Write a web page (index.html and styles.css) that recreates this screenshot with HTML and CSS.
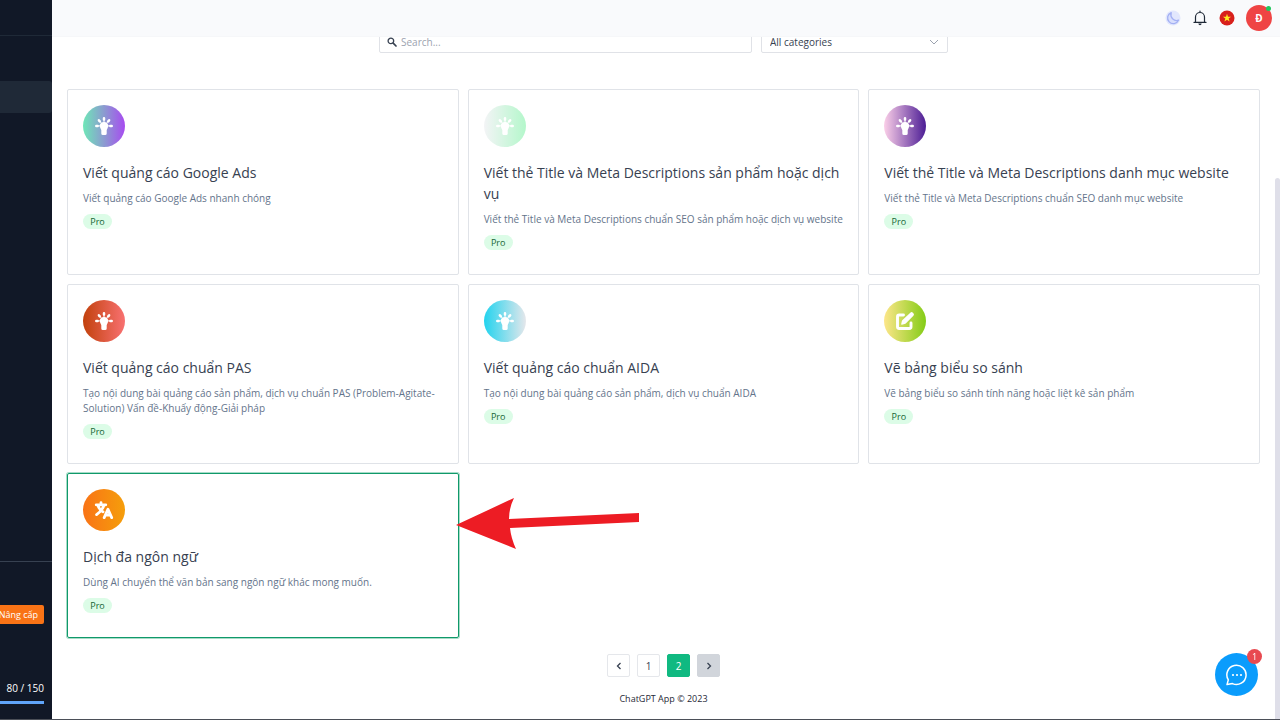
FILE: index.html
```html
<!DOCTYPE html>
<html lang="vi">
<head>
<meta charset="utf-8">
<meta name="viewport" content="width=device-width, initial-scale=1">
<title>ChatGPT App</title>
<link rel="stylesheet" href="styles.css">
</head>
<body>
<svg class="sprite" aria-hidden="true">
  <symbol id="bulb" viewBox="0 0 20 20">
    <path d="M10 5.900c2.500 0 4.200 1.700 4.200 3.900 0 2-1.200 3-1.500 4.400v3.200q0 1.600-1.600 1.600H8.900q-1.600 0-1.600-1.600v-3.200C7 12.800 5.800 11.800 5.800 9.800c0-2.200 1.700-3.900 4.200-3.900z" fill="currentColor"/>
    <path d="M10 2.200v1.400M4.900 4.300l.900 1M15.100 4.300l-.9 1M2.300 9.900h1.300M16.400 9.900h1.300" fill="none" stroke="currentColor" stroke-width="2.500" stroke-linecap="round"/>
    <path d="M10 3v4M5.800 5.300l2 2.400M14.200 5.300l-2 2.400M3 9.900h14" stroke="currentColor" stroke-width="1"/>
  </symbol>
  <symbol id="edit" viewBox="0 0 20 20">
    <path d="M8.500 4H4.200Q2.500 4 2.500 5.700v10.100q0 1.700 1.700 1.700h10.100q1.700 0 1.700-1.700V12" fill="none" stroke="currentColor" stroke-width="2.900" stroke-linecap="round"/>
    <path d="M15.300 1.700q1.300-1.200 2.600 0l.5.500q1.200 1.300 0 2.600L11 12.300q-.6.600-1.400.8l-2.700.6q-.9.100-.7-.8l.6-2.700q.2-.8.700-1.300z" fill="currentColor"/>
  </symbol>
  <symbol id="translate" viewBox="0 0 20 20">
    <path d="M2.200 4.800h9.600M7 2.600v2M10 5.200Q8.400 10.600 2.600 14.600M4 5.600q1.200 4 5 6.200M10.200 17.600l3.700-8.400 3.800 8.400M11.800 15h4.400" fill="none" stroke="currentColor" stroke-width="2.800" stroke-linecap="round" stroke-linejoin="round"/>
  </symbol>
</svg>

<div class="app">
  <aside class="sidebar">
    <div class="sidebar-brand"></div>
    <nav class="sidebar-nav"><a class="nav-item active" href="#" aria-label="Templates"></a></nav>
    <div class="sidebar-plan">
      <button class="upgrade" type="button">Nâng cấp</button>
      <div class="usage">
        <span>80 / 150</span>
        <div class="usage-bar"></div>
      </div>
    </div>
  </aside>

  <div class="page">
    <header class="topbar">
      <button class="icon-btn moon" type="button" aria-label="Theme">
        <svg width="16" height="16" viewBox="0 0 16 16"><circle cx="8" cy="8" r="7.500" fill="#e2e7fd"/><path d="M6.200 2.600A5.700 5.700 0 1 0 13.500 10.200Q10.200 11.300 7.600 8.800 5.100 6.200 6.200 2.600z" fill="#d9dffd" stroke="#a3b0f3" stroke-width="1.300" stroke-linejoin="round"/></svg>
      </button>
      <button class="icon-btn" type="button" aria-label="Notifications">
        <svg width="16" height="16" viewBox="0 0 16 16" fill="none" stroke="#1f2937" stroke-width="1.200"><path d="M2 12.400h12M3.500 12.200V7a4.500 4.500 0 0 1 9 0v5.200M8 2.300V1" stroke-linecap="round"/><path d="M6.300 13.500h3.400q-.3 1.700-1.700 1.700t-1.700-1.700z" fill="#1f2937" stroke="none"/></svg>
      </button>
      <button class="icon-btn" type="button" aria-label="Tiếng Việt">
        <svg width="16" height="16" viewBox="0 0 16 16"><circle cx="8" cy="8" r="7.500" fill="#d8201c"/><path d="M8 3.800l1 2.900h3.100L9.600 8.500l1 3L8 9.700l-2.600 1.800 1-3-2.500-1.800H7z" fill="#ffeb1f"/></svg>
      </button>
      <button class="avatar" type="button">Đ<span class="online"></span></button>
    </header>

    <main class="content">
      <form class="filters">
        <label class="search">
          <svg width="10" height="10" viewBox="0 0 10 10" fill="none" stroke="#374151"><circle cx="3.900" cy="3.900" r="2.800" stroke-width="1.300"/><path d="M6.200 6.200l2.800 2.800" stroke-width="1.700" stroke-linecap="round"/></svg>
          <input type="text" placeholder="Search..." aria-label="Search">
        </label>
        <div class="category">
          <select aria-label="Category"><option>All categories</option></select>
          <svg width="10" height="6" viewBox="0 0 10 6" fill="none" stroke="#9ca3af"><path d="M1 1l4 4 4-4"/></svg>
        </div>
      </form>

      <section class="cards">
        <article class="card">
          <div class="badge-icon mint"><svg><use href="#bulb"/></svg></div>
          <h2>Viết quảng cáo Google Ads</h2>
          <p>Viết quảng cáo Google Ads nhanh chóng</p>
          <span class="tag">Pro</span>
        </article>
        <article class="card">
          <div class="badge-icon pale"><svg><use href="#bulb"/></svg></div>
          <h2>Viết thẻ Title và Meta Descriptions sản phẩm hoặc dịch vụ</h2>
          <p>Viết thẻ Title và Meta Descriptions chuẩn SEO sản phẩm hoặc dịch vụ website</p>
          <span class="tag">Pro</span>
        </article>
        <article class="card">
          <div class="badge-icon violet"><svg><use href="#bulb"/></svg></div>
          <h2>Viết thẻ Title và Meta Descriptions danh mục website</h2>
          <p>Viết thẻ Title và Meta Descriptions chuẩn SEO danh mục website</p>
          <span class="tag">Pro</span>
        </article>
        <article class="card">
          <div class="badge-icon red"><svg><use href="#bulb"/></svg></div>
          <h2>Viết quảng cáo chuẩn PAS</h2>
          <p>Tạo nội dung bài quảng cáo sản phẩm, dịch vụ chuẩn PAS (Problem-Agitate-Solution) Vấn đề-Khuấy động-Giải pháp</p>
          <span class="tag">Pro</span>
        </article>
        <article class="card">
          <div class="badge-icon cyan"><svg><use href="#bulb"/></svg></div>
          <h2>Viết quảng cáo chuẩn AIDA</h2>
          <p>Tạo nội dung bài quảng cáo sản phẩm, dịch vụ chuẩn AIDA</p>
          <span class="tag">Pro</span>
        </article>
        <article class="card">
          <div class="badge-icon lime"><svg><use href="#edit"/></svg></div>
          <h2>Vẽ bảng biểu so sánh</h2>
          <p>Vẽ bảng biểu so sánh tính năng hoặc liệt kê sản phẩm</p>
          <span class="tag">Pro</span>
        </article>
        <article class="card selected">
          <div class="badge-icon orange"><svg><use href="#translate"/></svg></div>
          <h2>Dịch đa ngôn ngữ</h2>
          <p>Dùng AI chuyển thể văn bản sang ngôn ngữ khác mong muốn.</p>
          <span class="tag">Pro</span>
          <svg class="arrow" width="184" height="52" viewBox="0 0 184 52" aria-hidden="true"><path d="M0 27L58 0Q53 10 53 21L183 15V24L54 30Q55 40 60 51z" fill="#ed1c24"/></svg>
        </article>
      </section>

      <nav class="pager" aria-label="Pagination">
        <button type="button" aria-label="Previous"><svg width="8" height="8" viewBox="0 0 8 8"><path d="M5.500 1l-3 3 3 3"/></svg></button>
        <button type="button">1</button>
        <button type="button" class="current">2</button>
        <button type="button" class="muted" aria-label="Next"><svg width="8" height="8" viewBox="0 0 8 8"><path d="M2.500 1l3 3-3 3"/></svg></button>
      </nav>
      <footer>ChatGPT App © 2023</footer>
    </main>
  </div>
</div>

<div class="scroll-thumb"></div>
<button class="chat" type="button" aria-label="Chat">
  <svg width="22" height="22" viewBox="0 0 22 22"><path d="M1 20.600l1.300-4.700A9.600 9.600 0 1 1 6.500 19.600z" fill="none" stroke="#fff" stroke-width="1.500" stroke-linejoin="round"/><g fill="#fff"><circle cx="7" cy="11" r="1.100"/><circle cx="11" cy="11" r="1.100"/><circle cx="15" cy="11" r="1.100"/></g></svg>
  <span class="count">1</span>
</button>
</body>
</html>
```

FILE: styles.css
```css
* { box-sizing: border-box; }
body {
  margin: 0;
  font-family: "Open Sans", "Noto Sans", sans-serif;
  font-size: 10px;
  color: #374151;
  background: #fff;
}
button, input, select { font: inherit; color: inherit; }
button { padding: 0; border: 0; cursor: pointer; }
.sprite { position: absolute; width: 0; height: 0; }

.app { display: flex; height: 100vh; overflow: hidden; border-bottom: 1px solid #4b4f58; }

.sidebar {
  flex: 0 0 52px;
  display: flex;
  flex-direction: column;
  overflow: hidden;
  color: #fff;
  background: #111827;
}
.sidebar-brand { height: 36px; border-bottom: 1px solid #1f2937; }
.sidebar-nav { flex: 1; padding-top: 45px; }
.nav-item { display: block; height: 32px; border-radius: 0 3px 3px 0; background: #1f2937; }
.sidebar-plan {
  display: flex;
  flex-direction: column;
  align-items: flex-end;
  justify-content: space-between;
  height: 158px;
  padding: 43px 8px 15px 0;
  border-top: 1px solid #374151;
}
.upgrade {
  height: 19px;
  padding: 0 6px;
  border-radius: 2px;
  font-size: 9px;
  white-space: nowrap;
  background: #f97316;
}
.usage { width: 100%; text-align: right; line-height: 14px; white-space: nowrap; }
.usage-bar { height: 3px; margin-top: 6px; background: #60a5fa; }

.page { flex: 1; min-width: 0; display: flex; flex-direction: column; }
.topbar {
  flex: 0 0 37px;
  display: flex;
  align-items: center;
  justify-content: flex-end;
  gap: 11px;
  padding-right: 8px;
  background: #f9fafc;
  border-bottom: 1px solid #f6f7f9;
  z-index: 1;
}
.icon-btn { display: flex; background: none; }
.avatar {
  position: relative;
  width: 26px;
  height: 26px;
  border-radius: 50%;
  font-size: 10px;
  font-weight: 700;
  color: #fff;
  background: #ef4444;
}
.online {
  position: absolute;
  top: 1px;
  right: 1px;
  width: 5px;
  height: 5px;
  border-radius: 50%;
  background: #22c55e;
}

.content { flex: 1; min-height: 0; overflow: hidden; padding: 0 20px 0 15px; }
.filters { display: flex; justify-content: center; gap: 9px; margin-top: -7px; }
.search, .category {
  display: flex;
  align-items: center;
  height: 23px;
  border: 1px solid #e0e2e7;
  border-radius: 2px;
  background: #fff;
}
.search { flex: 0 1 373px; gap: 4px; padding: 0 7px; }
.search input { flex: 1; min-width: 0; padding: 0; border: 0; outline: 0; background: none; }
.search input::placeholder { color: #9ca3af; }
.category { flex: 0 1 187px; padding: 0 8px; }
.category select { flex: 1; min-width: 0; padding: 0; border: 0; outline: 0; appearance: none; background: none; }

.cards { display: grid; grid-template-columns: repeat(3, 1fr); gap: 9px; margin-top: 36px; }
.card {
  position: relative;
  padding: 15px 15px 24px;
  border: 1px solid #e0e3e8;
  border-radius: 2px;
}
.card.selected { border-color: #10996a; box-shadow: 0 0 0 1px #a7dcc8; }
.badge-icon {
  display: grid;
  place-items: center;
  width: 42px;
  height: 42px;
  border-radius: 50%;
  color: #fff;
}
.badge-icon svg { width: 20px; height: 20px; }
.mint { background: linear-gradient(90deg, #6ee7b7, #8b9bd0 50%, #a74bf0); }
.pale { background: linear-gradient(90deg, #f3f4f6, #b4f7cb); }
.violet { background: linear-gradient(90deg, #fbcfe8, #4c1d95); }
.red { background: linear-gradient(90deg, #c2410c, #f87171); }
.cyan { background: linear-gradient(90deg, #22d3ee, #e5e7eb); }
.lime { background: linear-gradient(90deg, #fde68a, #84cc16); }
.orange { background: linear-gradient(90deg, #f97316, #f59e0b); }
.card h2 { margin: 15px 0 0; font-size: 14px; font-weight: 400; line-height: 21px; color: #374151; }
.card p { margin: 8px 0; font-size: 10px; line-height: 15px; color: #64748b; }
.tag {
  display: block;
  width: 29px;
  border-radius: 8px;
  font-size: 9px;
  line-height: 15px;
  text-align: center;
  color: #166534;
  background: #dcfce7;
}
.arrow { position: absolute; left: calc(100% - 2px); top: 24px; z-index: 1; }

.pager { display: flex; justify-content: center; gap: 7px; margin-top: 16px; }
.pager button {
  display: grid;
  place-items: center;
  width: 23px;
  height: 23px;
  border: 1px solid #e5e7eb;
  border-radius: 2px;
  background: #fff;
}
.pager svg { fill: none; stroke: #374151; stroke-width: 1.300; }
.pager .current { color: #fff; background: #10b981; border-color: #10b981; }
.pager .muted { background: #d1d5db; border-color: #d1d5db; }
footer { margin-top: 15px; font-size: 9px; line-height: 14px; text-align: center; color: #1f2937; }

.scroll-thumb { position: fixed; right: 0; top: 178px; bottom: 1px; width: 5px; border-radius: 3px 3px 0 0; background: #dfdfe9; }
.chat {
  position: fixed;
  right: 22px;
  bottom: 24px;
  display: grid;
  place-items: center;
  width: 43px;
  height: 43px;
  border-radius: 50%;
  background: #0a9cfc;
}
.count {
  position: absolute;
  top: -4px;
  right: -4px;
  width: 15px;
  border-radius: 50%;
  font-size: 9px;
  line-height: 15px;
  color: #fff;
  background: #e84a50;
}
```
